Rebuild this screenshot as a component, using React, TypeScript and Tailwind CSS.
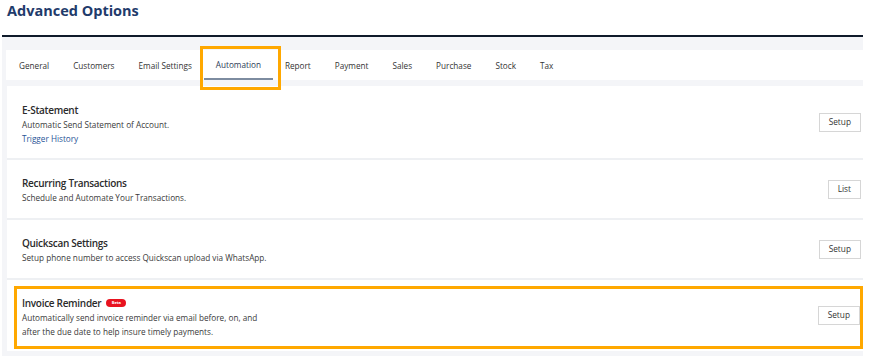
const tabs = [
  "General",
  "Customers",
  "Email Settings",
  "Automation",
  "Report",
  "Payment",
  "Sales",
  "Purchase",
  "Stock",
  "Tax",
];

const ActionButton = ({ label }: { label: string }) => (
  <button className="h-[19px] px-[9px] border border-[#d6d6d6] bg-white text-[8.3px] text-[#333] leading-none">
    {label}
  </button>
);

const RowText = ({ title, lines, link, beta }: any) => (
  <div className="flex flex-col pt-[3px]">
    <div className="flex items-center gap-[5px] text-[10px] font-semibold tracking-[-0.3px] text-[#2b2b2b] leading-[15px]">
      {title}
      {beta && (
        <span className="inline-flex items-center justify-center h-[8px] w-[20px] rounded-full bg-[#e8131f] text-white text-[4px] font-bold leading-none tracking-normal">
          Beta
        </span>
      )}
    </div>
    {lines.map((l: string, i: number) => (
      <div key={i} className="text-[8.2px] text-[#3a3a3a] leading-[14px]">
        {l}
      </div>
    ))}
    {link && (
      <div className="text-[8.2px] text-[#2a5597] leading-[13px]">{link}</div>
    )}
  </div>
);

export default function App() {
  return (
    <div
      className="w-[869px] h-[364px] bg-white overflow-hidden"
      style={{ fontFamily: '"Open Sans", "Noto Sans", sans-serif' }}
    >
      <h1 className="pl-[7px] pt-[1px] h-[35px] text-[14.5px] font-bold text-[#1f3b6b] leading-[20px]">
        Advanced Options
      </h1>
      <div className="ml-[2px] w-[861px] border-t-2 border-[#0f1a2a] bg-[#f4f5f8] pt-[13px] pb-[5px]">
        {/* tabs */}
        <div className="ml-[4px] h-[30px] bg-white flex">
          <div className="flex pl-[1px]">
            {tabs.map((t) => (
              <div
                key={t}
                className={
                  t === "Automation"
                    ? "relative px-3 h-[30px] pt-[3px] flex items-center text-[8.2px] text-[#2b3a55] border-b-2 border-[#7d8ca0]"
                    : "px-3 h-[30px] pt-[3px] flex items-center text-[8.2px] text-[#333]"
                }
              >
                {t}
                {t === "Automation" && (
                  <div className="absolute left-[-4px] right-[-8px] top-[-4px] h-[44px] border-[3px] border-[#ffa800]" />
                )}
              </div>
            ))}
          </div>
        </div>

        {/* settings card */}
        <div className="ml-[5px] mt-[6px] bg-white">
          <div className="h-[74px] flex items-center justify-between pl-[15px] pr-[2px] border-b-2 border-[#eef0f3]">
            <RowText
              title="E-Statement"
              lines={["Automatic Send Statement of Account."]}
              link="Trigger History"
            />
            <ActionButton label="Setup" />
          </div>
          <div className="h-[60px] flex items-center justify-between pl-[15px] pr-[2px] border-b-2 border-[#eef0f3]">
            <RowText
              title="Recurring Transactions"
              lines={["Schedule and Automate Your Transactions."]}
            />
            <ActionButton label="List" />
          </div>
          <div className="h-[60px] flex items-center justify-between pl-[15px] pr-[2px] border-b-2 border-[#eef0f3]">
            <RowText
              title="Quickscan Settings"
              lines={["Setup phone number to access Quickscan upload via WhatsApp."]}
            />
            <ActionButton label="Setup" />
          </div>
          <div className="pl-[7px] pt-[6px] pb-[2px]">
            <div className="h-[63px] flex items-center justify-between pl-[5px] pr-0 pb-[4px] border-[3px] border-[#ffa800]">
              <RowText
                title="Invoice Reminder"
                beta
                lines={[
                  "Automatically send invoice reminder via email before, on, and",
                  "after the due date to help insure timely payments.",
                ]}
              />
              <ActionButton label="Setup" />
            </div>
          </div>
        </div>
      </div>
    </div>
  );
}
